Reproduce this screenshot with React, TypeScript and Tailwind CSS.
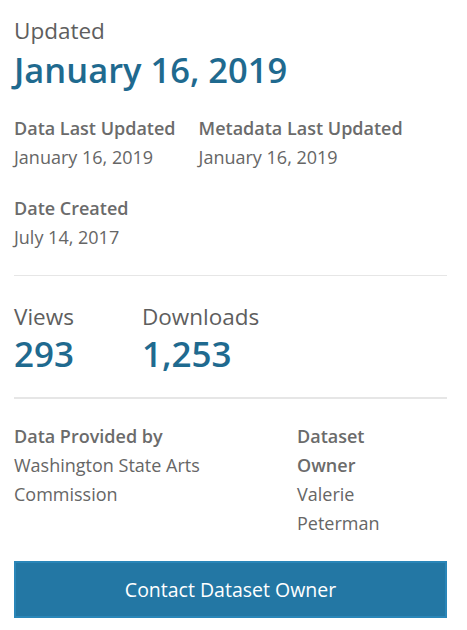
export default function App() {
  return (
    <div className="min-h-screen bg-white pl-[14px] pr-[20px] pt-[14px] text-[#666] [font-family:'Open_Sans',sans-serif]">
      <div className="text-[22.5px] leading-[34px] text-[#5e5e5e]">Updated</div>
      <div className="text-[34.5px] leading-[44px] font-semibold text-[#1f6a8f]">January 16, 2019</div>

      <div className="mt-[22px] flex gap-[23px]">
        <div>
          <div className="text-[18px] leading-[29px] font-semibold text-[#6b6b6b]">Data Last Updated</div>
          <div className="text-[18px] leading-[29px]">January 16, 2019</div>
        </div>
        <div>
          <div className="text-[18px] leading-[29px] font-semibold text-[#6b6b6b]">Metadata Last Updated</div>
          <div className="text-[18px] leading-[29px]">January 16, 2019</div>
        </div>
      </div>

      <div className="mt-[22px]">
        <div className="text-[18px] leading-[29px] font-semibold text-[#6b6b6b]">Date Created</div>
        <div className="text-[18px] leading-[29px]">July 14, 2017</div>
      </div>

      <hr className="mt-[23px] border-t border-[#e6e6e6]" />

      <div className="mt-[25px] flex">
        <div className="w-[128px]">
          <div className="text-[22.5px] leading-[32px] text-[#5e5e5e]">Views</div>
          <div className="text-[35px] leading-[42px] font-semibold text-[#1f6a8f]">293</div>
        </div>
        <div>
          <div className="text-[22.5px] leading-[32px] text-[#5e5e5e]">Downloads</div>
          <div className="text-[35px] leading-[42px] font-semibold text-[#1f6a8f]">1,253</div>
        </div>
      </div>

      <hr className="mt-[22px] border-t-2 border-[#e6e6e6]" />

      <div className="mt-[23px] flex">
        <div className="w-[283px] pr-[40px]">
          <div className="text-[18px] leading-[29px] font-semibold text-[#6b6b6b]">Data Provided by</div>
          <div className="text-[18px] leading-[29px]">Washington State Arts Commission</div>
        </div>
        <div className="w-[120px]">
          <div className="text-[18px] leading-[29px] font-semibold text-[#6b6b6b]">Dataset Owner</div>
          <div className="text-[18px] leading-[29px]">Valerie Peterman</div>
        </div>
      </div>

      <button className="mt-[23px] h-[57px] w-full border-2 border-[#2a86b8] bg-[#2377a4] text-[19.5px] text-white">
        Contact Dataset Owner
      </button>
    </div>
  );
}
